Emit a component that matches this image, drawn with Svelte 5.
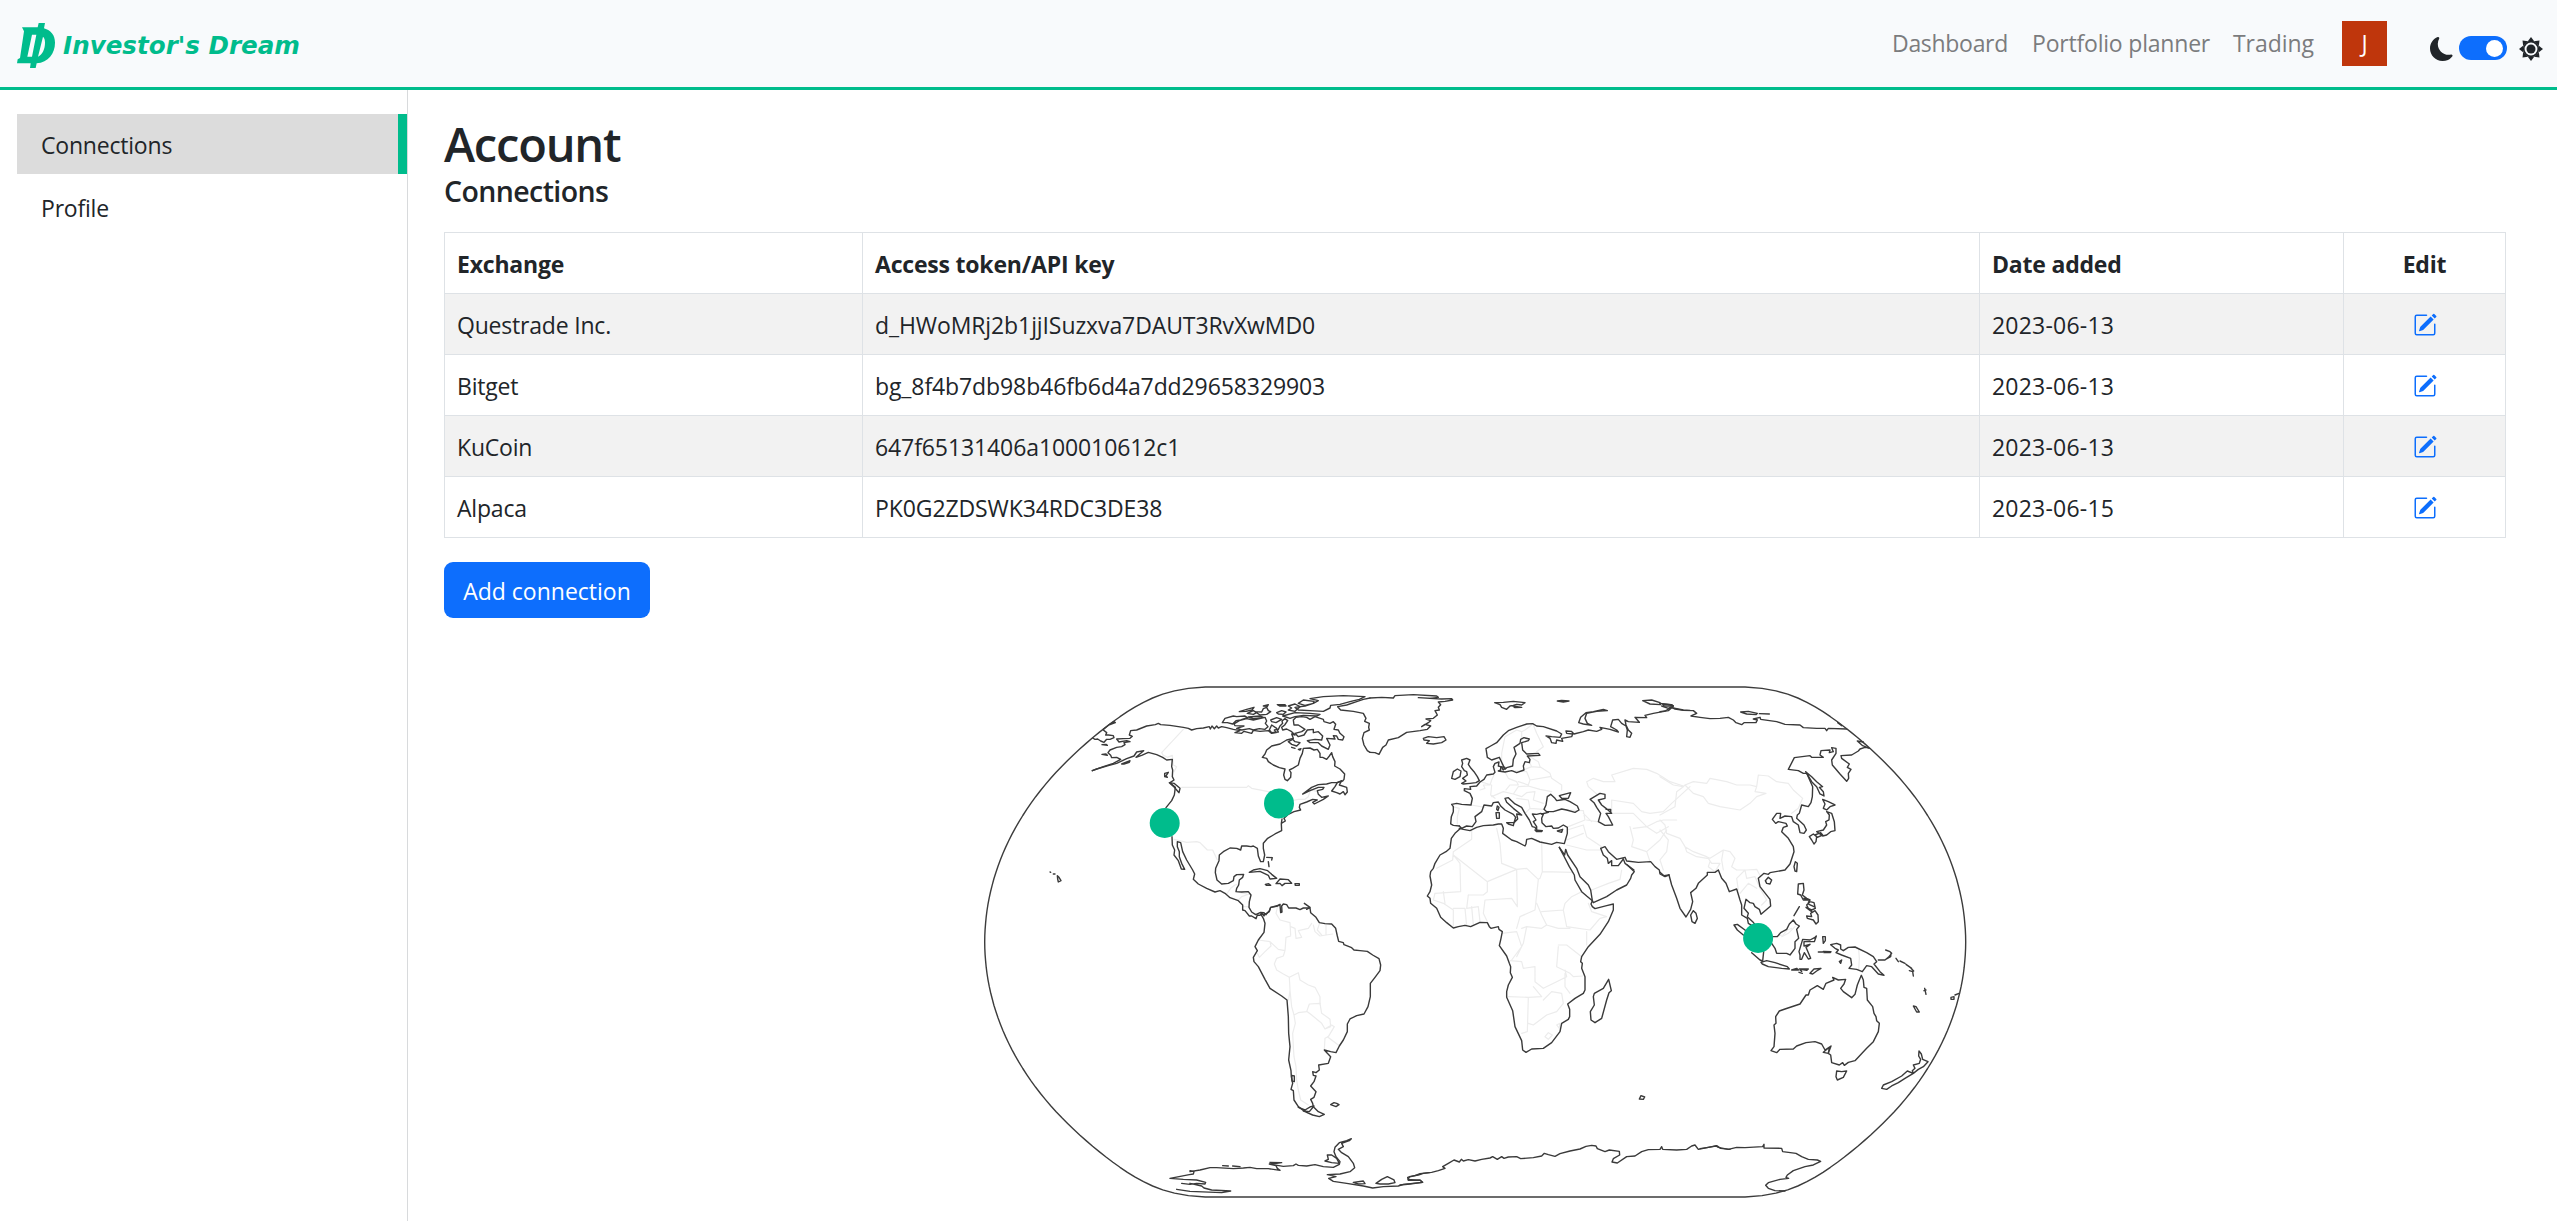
<script>
  const links = [
    { label: 'Dashboard', cls: 'dash' },
    { label: 'Portfolio planner', cls: 'plan' },
    { label: 'Trading', cls: 'trade' }
  ];

  const connections = [
    { exchange: 'Questrade Inc.', token: 'd_HWoMRj2b1jjISuzxva7DAUT3RvXwMD0', date: '2023-06-13' },
    { exchange: 'Bitget', token: 'bg_8f4b7db98b46fb6d4a7dd29658329903', date: '2023-06-13' },
    { exchange: 'KuCoin', token: '647f65131406a100010612c1', date: '2023-06-13' },
    { exchange: 'Alpaca', token: 'PK0G2ZDSWK34RDC3DE38', date: '2023-06-15' }
  ];

  // Natural Earth projection, used for the outline of the globe
  const scale = 179.3;
  const centre = [1475.2, 942];
  function project(lambda, phi) {
    const p2 = phi * phi;
    const p4 = p2 * p2;
    return [
      centre[0] + scale * lambda * (0.8707 - 0.131979 * p2 + p4 * (-0.013791 + p4 * (0.003971 * p2 - 0.001529 * p4))),
      centre[1] - scale * phi * (1.007226 + p2 * (0.015085 + p4 * (-0.044475 + 0.028874 * p2 - 0.005916 * p4)))
    ];
  }
  const rim = [];
  for (let d = -90; d <= 90; d += 2) rim.push(project(-Math.PI, (d * Math.PI) / 180));
  for (let d = 90; d >= -90; d -= 2) rim.push(project(Math.PI, (d * Math.PI) / 180));
  const sphere = 'M' + rim.map((p) => p[0].toFixed(1) + ',' + p[1].toFixed(1)).join('L') + 'Z';

  const markers = [
    [1164.7, 823],
    [1279, 803.4],
    [1758.1, 938]
  ];

  // Each sheet has its own origin; three sheet units make one map unit
  const sheets = [
    {
      x: 970,
      y: 670,
      coast: [
        'M367,302 400,290 430,280 452,268 440,262 425,263 422,256 414,248 420,240 440,232 455,230 465,224 462,218 480,215 470,212 447,216 440,207 460,206 480,205 487,199 478,195 482,182 500,180 530,168 556,164 565,160 572,164 600,166 640,172 655,175 665,180 680,176 700,174 718,170 721,177 726,168 733,176 740,168 745,174 755,170 770,173 790,178 810,182 795,188 815,190 822,184 845,190 850,181 870,184 895,182 905,190 918,188 913,180 925,178 930,168 938,160 936,153 945,146 953,152 944,165 935,172 938,180 950,177 965,185 975,195 965,192 970,205 950,210 930,222 905,228 890,240 885,252 877,262 890,265 895,275 910,285 928,293 945,297 941,315 945,328 952,332 962,322 963,308 958,300 968,295 985,285 990,265 997,250 1000,235 1020,234 1032,240 1042,238 1050,250 1050,262 1058,262 1070,268 1078,258 1085,248 1088,260 1095,275 1094,288 1110,297 1124,312 1122,328 1118,333 1100,338 1085,338 1070,342 1045,344 1025,352 998,372 1020,362 1045,352 1062,352 1058,358 1042,362 1045,373 1055,382 1075,378 1060,388 1033,402 1028,397 1042,390 1028,388 1010,396 990,403 988,412 992,420 972,425 955,433 942,445 946,453 934,460 936,447 934,462 935,482 915,492 893,505 880,520 880,535 884,555 880,575 872,575 865,558 862,535 850,528 843,530 830,528 815,528 812,540 800,535 780,534 760,545 748,555 747,572 737,595 736,608 741,630 755,642 775,640 790,632 792,620 800,614 821,613 818,622 808,630 806,645 800,655 798,665 815,666 835,665 843,675 838,695 837,712 845,726 857,734 872,727 882,728 888,734 898,722 902,712 920,709 930,703',
        'M885,732 882,738 876,730 870,736 862,735 858,746 845,738 838,738 825,722 818,720 818,705 805,692 780,683 765,670 750,662 735,666 710,655 685,642 670,628 674,612 668,600 650,570 638,545 632,518 622,515 622,530 628,545 628,560 635,580 644,598 634,597 625,572 612,555 614,540 607,525 606,500 M588,413 605,392 613,375 616,352 600,338 612,330 607,320 608,300 605,290 607,268 590,270 578,262 560,254 535,247 515,256 498,262 521,242 500,246 492,258 470,266 440,280 415,287 380,297 367,302',
        'M598,338 612,340 630,355 627,368 613,352Z M584,310 595,307 588,318 592,322 584,320Z M455,282 480,272 478,277 462,282Z M396,253 408,252 412,256Z',
        'M400,180 410,188 407,195 415,195 430,197 432,203 420,208 410,208 402,217 392,213 383,207 375,208 368,204 M396,224 412,226 408,223Z M400,178 420,162 432,155 436,158 420,164',
        'M240,606 242,607 M250,612 255,612 M262,617 267,622 273,632 265,636 263,627Z',
        'M757,158 765,145 790,138 800,140 825,138 832,143 812,150 798,152 788,162 772,158Z M792,162 808,152 830,146 850,150 885,142 890,153 886,160 894,170 885,178 868,176 850,180 838,176 815,180 800,175 822,168 795,167Z M835,141 870,138 880,142 850,146Z',
        'M808,125 830,118 852,112 846,120 828,124Z M832,130 850,122 860,128 850,133Z M855,125 875,126 880,116 890,112 895,122 902,125 890,133 870,135Z M880,108 895,104 892,109Z M922,104 945,104 948,108 930,108Z M920,128 935,122 948,126 940,133 925,132Z M955,108 975,102 990,110 975,124 955,120 965,114Z M902,150 920,143 935,148 918,158 905,155Z M905,165 920,175 925,186 905,188 898,180Z M938,138 975,128 1020,130 1050,133 1040,138 1000,136 975,140 960,145Z',
        'M985,100 1000,90 1032,94 1030,100 1005,106Z M1005,108 1030,100 1045,92 1020,86 1040,83 1060,80 1120,77 1185,80 1168,88 1140,95 1110,103 1082,106 1080,114 1060,124 1020,122 985,120 975,112Z',
        'M970,150 978,142 995,140 1010,142 1020,148 1035,140 1060,148 1062,155 1080,160 1090,155 1097,163 1092,178 1105,180 1110,190 1122,200 1118,210 1105,208 1100,198 1090,197 1095,207 1070,205 1080,225 1075,238 1055,228 1045,218 1020,218 1012,212 1035,208 1055,210 1058,198 1045,185 1030,188 1030,178 1012,180 1002,195 985,200 975,190 995,185 1005,178 985,165 972,165Z',
        'M955,215 968,208 975,215 990,218 980,228 965,223Z M965,232 975,235 M985,238 993,236 990,240Z',
        'M1085,363 1095,350 1102,338 1115,332 1108,345 1130,352 1132,366 1125,374 1120,365 1110,372 1100,368Z',
        'M838,607 850,600 870,596 893,602 905,613 920,625 900,627 895,616 870,604Z M918,641 930,627 955,629 965,640 945,640 936,647 930,640Z M886,643 896,641 902,646 890,646Z M975,641 988,641 988,646 976,646Z M890,562 907,563 905,570 M895,575 897,590',
        'M1200,84 1180,88 1160,95 1130,105 1103,110 1112,120 1150,124 1180,130 1188,145 1184,154 1198,160 1196,172 1198,180 1182,188 1177,205 1182,225 1192,242 1200,247'
      ],
      borders: [
        'M640,178 575,248 580,256 592,262 607,256 610,285 620,290 612,305 M635,352 830,352 835,347 845,355 880,362 910,368 M960,393 985,388 1005,388 1015,380 1022,358 1040,365',
        'M612,508 650,517 680,515 690,518 712,540 728,540 742,570 M770,672 782,655 795,645 802,643 M800,665 812,668 830,672 M805,690 815,680 838,672 M820,710 838,710'
      ]
    },
    {
      x: 1190,
      y: 900,
      coast: [
        'M212,42 225,43 238,35 242,22 258,18 270,15 272,38 276,36 275,18 280,12 290,14 296,24 318,24 330,29 340,24 360,24 362,38 378,52 388,68 405,71 425,72 437,85 442,108 446,124 460,128 462,134 485,143 492,150 510,152 532,154 548,165 567,176 572,195 570,212 555,232 541,250 541,290 534,320 522,342 500,347 480,357 472,372 472,395 460,420 448,438 438,458 422,455 403,450 412,460 422,470 415,490 386,495 388,510 378,518 368,515 370,526 378,528 372,545 362,558 378,575 372,592 362,598 368,610 370,620 385,635 403,643 388,650 368,645 345,635 325,620 312,600 310,572 303,568 308,550 304,530 303,512 296,480 300,440 296,400 295,350 291,300 275,288 240,265 225,238 205,200 192,185 190,172 202,152 195,140 205,120 222,97 225,70 220,55 212,42',
        'M305,526 313,528 313,545 306,543Z M343,10 360,22 350,28 M422,614 432,608 440,610 447,614 438,620 430,617Z M325,622 345,630 362,620 372,618 358,635 340,633',
        'M484,716 470,722 448,728 435,742 432,755 438,770 450,785 448,793 430,802 400,800 375,794 350,798 325,796 318,792 310,797 280,799 238,792 258,797 262,805 270,811 235,806 200,806 180,802 160,804 130,806 80,803 60,803 30,810 0,815 M484,716 478,722 455,730 460,740 445,748 455,758 475,770 490,790 494,803 480,815 450,822 412,824 438,830 416,835 430,844 470,850 520,858 548,864 580,860 625,858 640,853 697,847 690,841 655,838 658,830 685,825 700,820 718,818',
        'M412,765 425,765 440,775 448,790 425,788 405,783 415,778Z M98,797 115,798 M128,798 150,800 M240,787 275,788 245,792Z M490,847 520,843 525,851 505,852Z M558,850 575,838 592,830 612,840 615,848 595,852 570,852Z',
        'M0,812 12,815 10,822 -2,824 -60,835 M-60,835 -20,838 20,840 47,847 45,852 20,850 0,853 -25,850 M0,850 35,858 42,864 65,870 122,873 95,878 0,874 -40,868'
      ],
      borders: [
        'M262,22 258,40 270,60 300,68 302,105 M302,80 315,85 318,115 335,112 325,92 355,85 365,70 M370,75 375,95 390,108 408,105 428,102 M388,72 382,90 395,105 M408,74 408,102 M205,120 240,125 243,138 225,155 208,172 202,160 M240,125 265,148 285,152 288,112 302,108 M285,152 280,168 260,175 253,192 260,210 280,222 298,232 325,218 330,240 355,255 375,262 390,290 390,312',
        'M298,232 300,270 296,300 M300,270 305,320 312,345 316,370 308,400 310,440 312,470 318,500 320,540 325,570 332,600 355,615 M312,345 325,338 350,335 358,312 390,310 395,340 410,350 420,358 422,380 405,387 395,370 365,345 352,335 M408,385 425,375 433,380 415,410 405,415 403,448 M412,410 445,435'
      ]
    },
    {
      x: 1370,
      y: 670,
      coast: [
        'M0,84 35,82 70,84 75,77 130,74 200,78 205,82 180,85 145,83 215,87 245,86 248,90 225,94 205,96 212,104 205,112 208,120 195,122 202,135 190,145 168,147 182,152 175,158 155,170 165,163 182,168 172,178 150,182 110,187 85,203 55,210 48,225 38,232 27,253 15,248 0,247',
        'M160,205 175,200 200,203 222,200 228,210 215,218 190,222 170,220 178,212 162,210Z',
        'M374,98 400,97 430,94 465,98 455,105 440,103 430,106 420,108 410,118 395,112 390,104Z M428,108 455,112 435,113Z M562,93 575,91 597,93 580,96Z M818,92 845,90 870,98 872,104 840,102Z M878,102 905,104 910,108 882,108Z',
        'M712,122 680,124 650,130 645,145 652,160 665,166 640,162 626,158 632,142 648,128 670,125 700,118Z',
        'M268,468 250,466 242,462 244,440 250,425 250,410 245,403 260,400 275,403 303,405 307,385 300,370 283,362 283,356 302,358 300,350 320,348 330,336 342,328 350,315 370,312 375,307 370,290 375,280 387,276 385,288 392,290 392,300 385,303 405,306 425,302 440,308 462,300 460,288 465,275 478,278 480,268 472,258 510,256 505,250 470,252 458,240 455,218 475,212 478,207 462,203 452,208 450,220 432,232 438,252 430,268 428,288 410,293 405,298 398,283 388,262 365,270 352,262 348,236 362,228 380,218 400,195 415,182 440,172 470,162 488,161 500,168 520,170 560,183 575,192 570,202 545,200 528,198 540,205 545,218 558,220 560,210 578,214 575,205 605,200 608,192 590,190 588,183 604,184 612,192 640,185 655,180 680,184 695,178 690,172 720,178 745,186 740,180 722,170 728,150 745,148 755,160 768,168 772,180 770,200 780,202 785,190 775,180 768,165 765,150 775,155 808,157 795,142 830,143 825,136 850,130 895,122 905,113 940,120 960,121',
        'M268,468 275,475 290,468 307,470 318,455 315,440 335,425 342,405 365,408 370,398 385,396 392,408 405,420 430,433 437,442 432,458 443,447 440,432 455,435 430,415 410,397 405,385 415,383 435,402 455,412 465,430 478,450 487,470 495,472 500,480 500,470 490,455 498,450 487,432 500,433 512,430 520,433 515,445 516,458 528,470 545,468 550,475 565,474 580,465 592,472 592,490 583,521 560,517 545,523 510,516 485,505 470,508 468,522 465,528 440,515 425,510 398,490 400,475 395,462 385,462 370,465 340,467 320,472 300,482 280,478 268,475',
        'M495,480 517,482 515,485 500,485Z M562,483 578,478 575,487Z M410,458 432,458 430,467 415,462Z M378,428 388,428 388,445 380,445Z M382,408 387,412 384,422 380,418Z M393,290 405,292 400,300Z',
        'M275,270 290,265 300,270 295,283 303,295 312,305 322,320 328,332 318,338 300,340 280,342 275,340 288,333 278,325 292,315 290,305 283,302 275,290 278,280Z M245,325 250,305 262,297 273,303 270,320 255,328Z',
        'M522,418 528,405 532,380 542,373 555,385 560,392 572,390 585,388 600,395 622,408 627,420 615,427 590,420 575,417 550,425 530,425Z M568,377 602,368 595,385 575,385Z M515,432 535,427',
        'M660,388 690,370 705,373 705,385 685,390 695,405 708,415 725,430 708,430 715,440 728,465 705,466 685,455 692,430 680,412 672,398Z M708,418 722,418 722,428',
        'M692,535 705,530 715,545 740,568 765,562 770,573 805,577 842,575 855,590 868,600 870,612 885,620 897,615 M692,535 700,555 712,565 715,580 725,572 725,587 745,587 760,567 765,580 792,600'
      ],
      borders: [
        'M395,285 395,250 405,200 440,180 455,185 465,180 485,165 M455,185 455,205 M490,165 500,190 520,230 500,245 M480,260 505,275 510,290 540,310 545,325 575,345 575,360 M372,315 365,330 360,345 340,345 345,355 330,360 M330,335 365,345 362,375 375,385 M405,306 415,325 440,335 445,345 420,345 408,360 M425,302 470,305 480,330 475,345 445,335 M460,300 485,290 478,275 M485,290 510,292 M480,330 540,320 M365,380 400,365 430,372 445,350 475,348 510,358 545,365 M430,372 455,380 470,368 495,365 490,390 520,400 M440,385 475,390 480,415 465,430 M480,415 520,418 M248,410 268,415 262,440 262,462 M303,405 345,412',
        'M655,350 650,335 670,325 700,335 735,335 725,315 790,295 830,298 860,310 900,335 940,348 M655,350 680,372 M725,425 725,390 790,400 815,425 840,430 880,425 905,400 960,350 M725,430 790,430 830,470 860,455 880,450 920,450 M780,470 790,510 785,530 M790,475 830,470 860,490 895,470 M785,530 830,545 870,510 890,480 M590,420 640,422 645,450 595,470 M650,450 680,455 M640,430 665,455 M640,465 650,500 695,530 M592,480 640,465 M590,510 640,490 M590,525 650,540 690,540 M840,575 830,545 M665,660 715,640 750,628 755,600'
      ]
    },
    {
      x: 1400,
      y: 800,
      coast: [
        'M182,85 165,100 154,115 150,145 138,155 120,165 105,190 100,205 92,215 90,228 95,255 90,275 82,288 90,295 92,310 110,325 122,352 140,368 160,384 175,380 195,376 212,380 240,367 262,368 268,380 273,385 295,380 297,388 307,395 303,415 298,437 320,468 328,490 332,500 331,518 337,532 325,555 320,575 320,592 338,632 345,680 365,722 368,750 378,757 395,747 430,745 455,728 480,695 485,670 505,658 509,650 509,628 503,612 525,595 550,580 555,570 555,530 545,505 547,490 542,485 545,470 565,440 600,403 625,365 640,330 640,312 620,317 585,326 577,320 573,312 577,302 560,288 545,275 525,240 523,225 508,200 490,165 478,142',
        'M478,142 494,165 497,148 503,165 530,205 540,230 565,255 572,270 577,302 580,308 620,290 650,270 680,255 692,235 695,225 703,215 682,195',
        'M626,538 634,572 627,578 620,600 605,655 585,668 573,660 571,635 583,615 580,590 583,580 610,565Z'
      ],
      borders: [
        'M215,90 215,118 160,155 158,180 110,205 M160,165 180,190 182,275 105,280 M160,165 262,245 285,235 350,208 M262,245 262,275 250,285 205,285 M290,85 300,130 305,190 350,208 380,205 415,238 420,235 427,215 425,125 M427,215 520,217 M350,208 352,320 335,295 255,300 250,340 262,365 M415,238 405,330 360,350 350,385 M410,310 425,345 440,375 425,385 380,380 365,385 M425,335 490,330 495,310 515,290 545,275 M490,330 500,380 570,390 600,355 620,350 575,335 565,310 M440,375 475,385 510,385 M560,395 560,435 M475,435 500,435 545,470 M475,440 470,500 510,520 520,530 548,528',
        'M105,280 100,300 130,310 160,330 160,380 M130,275 135,310 M160,325 195,325 200,378 M205,285 200,325 235,320 240,365 M215,320 220,375 M305,400 350,395 365,440 335,480 M380,380 370,430 350,470 M330,482 365,485 370,505 405,500 405,545 430,565 470,545 500,530 495,510 M325,590 385,592 425,590 400,560 M385,592 382,695 365,700 M385,670 400,675 440,645 470,635 490,610 485,580 455,575 430,600 M495,520 495,560 510,580 M435,710 445,698 457,705 445,718Z M470,675 480,670 478,685Z M405,545 405,500'
      ]
    },
    {
      x: 1660,
      y: 670,
      coast: [
        'M0,100 30,104 40,108 25,115 5,108 M0,125 15,123 35,112 45,117 70,121 100,122 110,130 93,138 120,142 150,146 180,145 205,142 220,150 228,158 245,164 252,158 288,158 292,150 280,147 300,142 302,148 350,155 375,163 420,165 430,173 470,175 495,175 500,182 505,175 560,177 M533,158 545,167',
        'M242,126 265,124 292,130 288,134 260,132Z M298,131 328,132 M628,235 608,227 592,213 610,216',
        'M27,615 35,645 50,685 60,715 78,741 92,718 98,695 92,668 108,655 115,640 142,615 142,607 165,607 175,600 185,625 198,640 208,665 230,657 240,690 245,705 245,735 262,745 265,760 290,775',
        'M0,607 12,617 27,615 M290,770 278,755 262,740 265,730 252,715 258,688 270,698 280,700 285,710 298,718 303,733 332,708 330,688 300,650 295,625 312,610 325,613 330,608 375,600 390,582 402,545 400,530 385,505 365,485 370,472 382,468 378,460 355,455 347,460 337,448 350,430 362,430 360,445 375,438 395,440 400,455 415,465 420,488 432,490 439,480 432,465 410,445 412,435 418,430 425,405 445,410 453,398 457,380 458,350 440,310 430,310 415,302 385,298 403,263 450,257 455,262 480,262 490,262 480,255 483,242 510,240 508,248 520,245 515,233 528,235 528,250 515,270 517,285 540,312 560,334 566,325 565,310 573,298 562,292 568,282 545,265 543,257 575,255 595,243 600,237 615,232 625,233',
        'M437,305 455,320 470,335 488,350 478,352 490,365 492,378 480,372 470,350 455,335Z M488,388 505,395 525,405 510,410 500,420 490,415 495,402Z M500,425 515,430 523,455 525,482 512,485 500,495 488,498 478,490 470,485 490,480 500,465 497,455 507,450 508,435Z M448,500 460,492 470,500 468,515 462,522 455,510Z M465,495 482,488 488,495 472,502Z',
        'M402,590 406,575 412,580 410,605 405,603Z M316,632 325,622 335,630 330,642 320,640Z M92,735 100,722 108,730 112,745 105,760 96,755Z M415,642 430,640 432,660 427,675 440,685 450,690 430,690 422,675 413,672Z M402,737 418,710 M432,685 450,690 445,697 M440,705 450,695 462,698 466,715 455,720 445,715Z M452,730 465,722 474,735 475,755 468,762 460,750 442,745 440,738 455,740Z M447,703 462,710 M438,712 455,725',
        'M222,765 232,763 255,780 300,830 M222,765 232,780 250,795 M338,800 352,800 362,788 380,778 388,762 400,750 408,762 418,768 410,778 416,805 405,815 405,835 390,855 380,850 350,850 345,835 335,820'
      ],
      borders: [
        'M0,320 40,345 70,350 75,345 100,335 140,340 150,325 200,335 230,345 270,345 290,350 285,365 318,370 290,380 270,400 240,420 180,410 145,400 130,380 100,370 75,345 M70,350 50,365 45,410 0,435 M290,350 295,315 325,318 350,335 385,340 400,360 428,385 415,415 395,430 M0,450 15,465 20,490 60,505 75,530 100,545 140,560 150,565 190,540 210,545 225,565 215,590 230,600 M75,530 80,545 110,560 142,565 M145,565 155,580 180,580 165,605 145,590 150,575 M190,540 185,570 190,600 M230,600 260,600 290,598 302,620 M235,660 230,625 255,600 260,625 285,620 300,655 320,690 305,705 M240,670 265,640 290,655 M0,480 25,510 20,545 0,570 10,600 M365,800 385,790 405,770'
      ]
    },
    {
      x: 1700,
      y: 900,
      coast: [
        'M155,158 180,180 188,183 191,155 M183,187 200,182 225,188 262,200 268,207 245,205 205,200 187,192Z M275,210 290,205 295,210Z M298,207 325,207 320,211Z M297,217 307,220 M330,220 342,207 363,205 350,213 338,222Z M300,210 305,214',
        'M300,178 300,165 297,155 308,118 330,120 345,112 349,108 343,125 312,125 312,138 330,133 318,142 332,175 325,177 313,158 305,178Z M368,110 376,110 376,122 370,130Z M355,156 368,156 M370,154 393,155 390,158 372,158 M418,185 425,180 422,190Z',
        'M392,134 410,130 422,135 422,147 430,152 445,142 465,141 500,158 520,170 530,185 522,192 540,215 552,226 535,222 515,200 500,197 487,215 470,208 447,205 455,195 452,175 425,165 408,158 415,150 405,145Z M535,180 555,180 565,172 575,160 570,155 557,150 M557,178 572,170 573,160 M588,175 595,185 M600,183 615,190 M618,193 635,205 M628,212 638,215 640,228 M633,205 641,213',
        'M674,265 678,283 M672,272 678,270 M640,318 648,320 658,336 650,336Z M753,292 762,290 762,298 753,298Z M765,285 777,280',
        'M484,226 490,240 492,262 500,265 502,300 518,320 522,340 528,350 530,362 538,370 535,395 520,425 500,445 465,482 445,487 433,496 428,488 418,495 395,488 392,465 385,460 370,457 388,442 385,460 393,438 375,450 365,432 345,425 318,428 290,438 280,447 240,448 230,458 213,452 222,440 225,400 222,375 228,370 227,350 238,333 255,327 300,312 318,285 325,285 330,270 352,257 370,268 378,250 402,240 398,232 415,240 437,238 432,252 422,265 430,275 455,293 465,283 472,255 478,240Z',
        'M410,513 425,515 440,513 430,532 412,540 408,530Z M657,453 664,462 668,478 684,485 670,500 655,508 640,520 637,512 645,505 640,495 658,490 662,478 656,468Z M622,513 640,520 615,535 595,548 575,558 560,568 545,565 550,555 575,545 605,528Z',
        'M0,746 20,743 38,740 48,738 55,742 85,748 110,742 135,743 188,740 192,733 192,744 245,745 248,755 288,760 305,770 325,778 352,780 362,784 340,795 315,800 280,812 262,825 258,832 266,835 240,838 205,848 197,856 205,865 225,872 255,873'
      ],
      borders: ['M476,148 478,175 476,210 M228,108 250,105 262,90 275,85']
    },
    {
      x: 1400,
      y: 1080,
      coast: [
        'M0,315 30,312 68,307 60,300 25,301 23,292 45,287 60,281 95,277 115,272 135,265 128,260 145,250 162,240 178,246 184,238 190,243 205,239 225,243 245,238 270,234 278,230 292,238 305,230 312,235 325,231 350,230 362,236 400,233 425,228 433,220 445,224 465,229 480,221 510,213 540,207 558,199 575,196 588,198 592,206 615,215 628,210 658,214 659,225 640,236 636,246 652,249 680,230 705,228 725,215 745,209 780,208 785,200 788,208 830,210 860,208 875,198 885,195 895,208 925,202 950,197 962,205 990,208',
        'M718,57 723,47 734,51 730,58Z'
      ],
      borders: []
    }
  ];
</script>

<div class="page">
  <header>
    <div class="brand">
      <svg class="logo" viewBox="51 69 114 135">
        <path
          fill-rule="evenodd"
          d="M66,82H113L116,69H135L132,85C153,91 165,106 165,128C165,160 145,187 110,190L107,204H90L92,190H51L53,178L60,174L72,94ZM96,104L82,170H96L109,104ZM129,110L114,170C128,164 135,146 135,128C135,119 133,113 129,110Z"
        />
      </svg>
      <span class="name">Investor's Dream</span>
    </div>
    <nav>
      {#each links as link}
        <a class={link.cls}>{link.label}</a>
      {/each}
      <div class="avatar">J</div>
      <div class="theme">
        <svg class="moon" viewBox="0 0 16 16">
          <path
            d="M6 .278a.768.768 0 0 1 .08.858 7.208 7.208 0 0 0-.878 3.46c0 4.021 3.278 7.277 7.318 7.277.527 0 1.04-.055 1.533-.16a.787.787 0 0 1 .81.316.733.733 0 0 1-.031.893A8.349 8.349 0 0 1 8.344 16C3.734 16 0 12.286 0 7.71 0 4.266 2.114 1.312 5.124.06A.752.752 0 0 1 6 .278z"
          />
        </svg>
        <span class="switch"><span class="knob"></span></span>
        <svg class="sun" viewBox="-12 -12 24 24">
          {#each [0, 45, 90, 135, 180, 225, 270, 315] as a}
            <path d="M-3.4,-7.6L0,-12L3.4,-7.6Z" transform="rotate({a})" />
          {/each}
          <circle class="ring" r="7.3" />
          <circle r="4.5" />
        </svg>
      </div>
    </nav>
  </header>

  <div class="body">
    <aside>
      <a class="item active">Connections</a>
      <a class="item">Profile</a>
    </aside>

    <main>
      <h1>Account</h1>
      <h2>Connections</h2>
      <table>
        <colgroup><col class="c1" /><col class="c2" /><col class="c3" /><col class="c4" /></colgroup>
        <thead>
          <tr><th>Exchange</th><th>Access token/API key</th><th>Date added</th><th class="edit">Edit</th></tr>
        </thead>
        <tbody>
          {#each connections as row}
            <tr>
              <td>{row.exchange}</td>
              <td class="token">{row.token}</td>
              <td class="date">{row.date}</td>
              <td class="edit">
                <svg class="pencil" viewBox="0 0 16 16">
                  <path
                    d="M15.502 1.94a.5.5 0 0 1 0 .706L14.459 3.69l-2-2L13.502.646a.5.5 0 0 1 .707 0l1.293 1.293zm-1.75 2.456-2-2L4.939 9.21a.5.5 0 0 0-.121.196l-.805 2.414a.25.25 0 0 0 .316.316l2.414-.805a.5.5 0 0 0 .196-.12l6.813-6.814z"
                  />
                  <path
                    fill-rule="evenodd"
                    d="M1 13.5A1.5 1.5 0 0 0 2.5 15h11a1.5 1.5 0 0 0 1.5-1.5v-6a.5.5 0 0 0-1 0v6a.5.5 0 0 1-.5.5h-11a.5.5 0 0 1-.5-.5v-11a.5.5 0 0 1 .5-.5H9a.5.5 0 0 0 0-1H2.5A1.5 1.5 0 0 0 1 2.5v11z"
                  />
                </svg>
              </td>
            </tr>
          {/each}
        </tbody>
      </table>
      <button>Add connection</button>

      <svg class="map" viewBox="444 660 2062 561">
        {#each sheets as sheet}
          <g transform="translate({sheet.x} {sheet.y}) scale(0.33333)">
            {#each sheet.borders as d}<path class="border" {d} />{/each}
          </g>
        {/each}
        {#each sheets as sheet}
          <g transform="translate({sheet.x} {sheet.y}) scale(0.33333)">
            {#each sheet.coast as d}<path class="coast" {d} />{/each}
          </g>
        {/each}
        <path class="sphere" d={sphere} />
        {#each markers as m}<circle class="marker" cx={m[0]} cy={m[1]} r="15" />{/each}
      </svg>
    </main>
  </div>
</div>

<style>
  :global(body) {
    margin: 0;
    overflow: hidden;
    background: #fff;
  }
  .page {
    height: 1221px;
    display: flex;
    flex-direction: column;
    overflow: hidden;
    color: #212529;
    font-family: 'Open Sans', 'Noto Sans', sans-serif;
    font-size: 23px;
    line-height: 36px;
    letter-spacing: -0.2px;
  }
  header {
    box-sizing: border-box;
    height: 90px;
    flex: none;
    display: flex;
    justify-content: space-between;
    background: #f8fafc;
    border-bottom: 3px solid #00bc8c;
  }
  .brand {
    display: flex;
    align-items: flex-start;
    padding: 23px 0 0 17px;
    gap: 8px;
  }
  .logo {
    width: 38px;
    height: 45px;
    fill: #00bc8c;
  }
  .name {
    padding-top: 5px;
    color: #00bc8c;
    font: italic bold 24.6px/36px 'DejaVu Sans', sans-serif;
    letter-spacing: 0;
  }
  nav {
    display: flex;
    align-items: flex-start;
    padding: 21px 14px 0 0;
    white-space: nowrap;
  }
  nav a {
    padding-top: 4px;
    color: #7b7c7e;
  }
  .dash {
    width: 140px;
    letter-spacing: -0.3px;
  }
  .plan {
    width: 201px;
  }
  .trade {
    width: 109px;
    letter-spacing: -0.05px;
  }
  .avatar {
    width: 45px;
    height: 45px;
    line-height: 44px;
    text-align: center;
    color: #fff;
    background: #bf360c;
  }
  .theme {
    display: flex;
    align-items: center;
    height: 24px;
    margin: 15px 0 0 43px;
    fill: #212529;
  }
  .moon {
    width: 24px;
    height: 24px;
    margin-top: 2px;
  }
  .switch {
    display: flex;
    align-items: center;
    justify-content: flex-end;
    box-sizing: border-box;
    width: 48px;
    height: 24px;
    margin: 0 12px 0 5px;
    padding-right: 4px;
    border-radius: 12px;
    background: #0d6efd;
  }
  .knob {
    width: 17px;
    height: 17px;
    border-radius: 50%;
    background: #fff;
  }
  .sun {
    width: 24px;
    height: 24px;
    margin: 2px 0 0 0;
  }
  .ring {
    fill: #f8fafc;
    stroke: #212529;
    stroke-width: 1.7;
  }
  .body {
    flex: 1;
    display: flex;
    min-height: 0;
  }
  aside {
    box-sizing: border-box;
    width: 408px;
    flex: none;
    display: flex;
    flex-direction: column;
    gap: 3px;
    padding: 24px 0 0 17px;
    border-right: 1px solid #d8dadc;
  }
  .item {
    box-sizing: border-box;
    height: 60px;
    padding: 13px 24px 0;
    border-right: 9px solid transparent;
  }
  .active {
    background: #dcdcdc;
    border-right-color: #00bc8c;
  }
  main {
    flex: 1;
    min-width: 0;
    padding: 24px 51px 0 36px;
    display: flex;
    flex-direction: column;
    align-items: flex-start;
  }
  h1 {
    margin: 1px 0 0;
    font-size: 47px;
    line-height: 58px;
    font-weight: 600;
    letter-spacing: -1.2px;
  }
  h2 {
    margin: 0 0 23px;
    font-size: 28.5px;
    line-height: 36px;
    font-weight: 600;
    letter-spacing: -0.6px;
  }
  table {
    width: 2062px;
    table-layout: fixed;
    border-collapse: collapse;
  }
  .c1 {
    width: 418px;
  }
  .c2 {
    width: 1117px;
  }
  .c3 {
    width: 364px;
  }
  .c4 {
    width: 162px;
  }
  th,
  td {
    box-sizing: border-box;
    height: 61px;
    padding: 1px 12px 0;
    border: 1px solid #dee2e6;
    text-align: left;
    vertical-align: middle;
  }
  th {
    font-weight: 700;
  }
  tbody tr:nth-child(odd) {
    background: #f2f2f2;
  }
  .token {
    letter-spacing: -0.1px;
  }
  .date {
    letter-spacing: 0.22px;
  }
  th.edit,
  td.edit {
    text-align: center;
  }
  .pencil {
    display: block;
    width: 24px;
    height: 24px;
    margin: 0 auto;
    fill: #0d6efd;
  }
  button {
    width: 206px;
    height: 56px;
    margin: 24px 0 42px;
    padding: 1px 0 0;
    border: 0;
    border-radius: 9px;
    background: #0d6efd;
    color: #fff;
    font: inherit;
    letter-spacing: 0;
    white-space: nowrap;
  }
  .map {
    width: 2062px;
    height: 561px;
    flex: none;
    fill: none;
    stroke-linejoin: round;
    stroke-linecap: round;
  }
  .coast {
    stroke: #3a3a3a;
    stroke-width: 4.2;
  }
  .border {
    stroke: #ececec;
    stroke-width: 3.6;
  }
  .sphere {
    stroke: #3c3c3c;
    stroke-width: 1.4;
  }
  .marker {
    fill: #00bc8c;
  }
</style>
